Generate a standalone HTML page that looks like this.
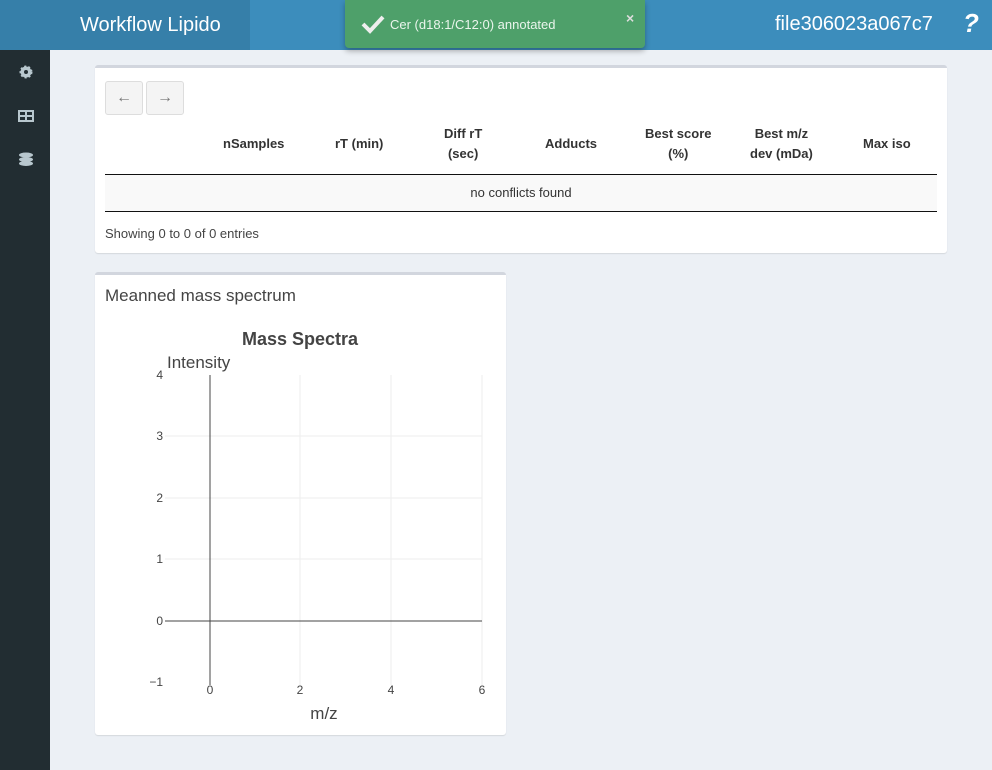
<!DOCTYPE html><html><head><style>
body{margin:0;width:992px;height:770px;background:#ecf0f5;font-family:"Liberation Sans",sans-serif;position:relative;overflow:hidden}
.hdr{position:absolute;left:0;top:0;width:992px;height:50px;background:#3c8dbc}
.logo{position:absolute;left:0;top:0;width:250px;height:50px;background:#367fa9;color:#fff;font-size:20px;line-height:50px}
.side{position:absolute;left:0;top:50px;width:50px;height:720px;background:#222d32}
.box{position:absolute;background:#fff;border-top:3px solid #d2d6de;border-radius:3px;box-shadow:0 1px 1px rgba(0,0,0,.1)}
.t{position:absolute;font-size:13px;color:#444}
.h{font-weight:bold;color:#333;text-align:center;line-height:20px}
</style></head><body>
<div class="hdr"><div class="logo"><span style="position:absolute;left:80px">Workflow Lipido</span></div>
<div style="position:absolute;left:775px;top:13px;color:#fff;font-size:20px">file306023a067c7</div>
<div style="position:absolute;left:963px;top:8px;color:#fff;font-size:26px;font-weight:bold;font-style:italic">?</div></div>
<div style="position:absolute;left:345px;top:0;width:300px;height:48px;background:#4ea06a;border-radius:0 0 4px 4px;box-shadow:0 3px 6px rgba(0,0,0,.3);color:#eaf5ec">
<svg style="position:absolute;left:16px;top:14px" width="24" height="20"><path d="M2 10l7 7L22 3" stroke="#eee" stroke-width="4" fill="none"/></svg>
<div style="position:absolute;left:45px;top:17px;font-size:13px">Cer (d18:1/C12:0) annotated</div>
<div style="position:absolute;left:281px;top:10px;font-size:14px;font-weight:bold;color:#ddd">×</div></div>
<div class="side">
<svg style="position:absolute;left:19px;top:15px" width="14" height="14"><circle cx="7" cy="7" r="5.5" fill="#b8c7ce" stroke="#b8c7ce" stroke-width="2" stroke-dasharray="2 2"/><circle cx="7" cy="7" r="2" fill="#222d32"/></svg>
<svg style="position:absolute;left:18px;top:60px" width="16" height="12"><rect x="1" y="1" width="14" height="10" fill="none" stroke="#b8c7ce" stroke-width="2"/><path d="M1 6h14M8 1v10" stroke="#b8c7ce" stroke-width="2"/></svg>
<svg style="position:absolute;left:18px;top:102px" width="16" height="14"><ellipse cx="8" cy="3" rx="7" ry="2.5" fill="#b8c7ce"/><ellipse cx="8" cy="7.5" rx="7" ry="2.5" fill="#b8c7ce"/><ellipse cx="8" cy="11.5" rx="7" ry="2.5" fill="#b8c7ce"/></svg></div>
<div class="box" style="left:95px;top:65px;width:852px;height:185px">
<div style="position:absolute;left:10px;top:13px;width:36px;height:32px;border:1px solid #ddd;background:#f4f4f4;border-radius:3px;color:#777;text-align:center;line-height:32px">←</div>
<div style="position:absolute;left:51px;top:13px;width:36px;height:32px;border:1px solid #ddd;background:#f4f4f4;border-radius:3px;color:#777;text-align:center;line-height:32px">→</div>
<div style="position:absolute;left:10px;top:106px;width:832px;border-top:1px solid #111"></div>
<div style="position:absolute;left:10px;top:107px;width:832px;height:36px;background:#f9f9f9;border-bottom:1px solid #111;font-size:13px;color:#333;text-align:center;line-height:36px">no conflicts found</div>
<div class="t h" style="left:128px;top:66px">nSamples</div>
<div class="t h" style="left:240px;top:66px">rT (min)</div>
<div class="t h" style="left:349px;top:56px">Diff rT<br>(sec)</div>
<div class="t h" style="left:450px;top:66px">Adducts</div>
<div class="t h" style="left:550px;top:56px">Best score<br>(%)</div>
<div class="t h" style="left:655px;top:56px">Best m/z<br>dev (mDa)</div>
<div class="t h" style="left:768px;top:66px">Max iso</div>
<div class="t" style="left:10px;top:158px">Showing 0 to 0 of 0 entries</div></div>
<div class="box" style="left:95px;top:272px;width:411px;height:460px">
<div style="position:absolute;left:10px;top:11px;font-size:17px;color:#444">Meanned mass spectrum</div>
<svg style="position:absolute;left:0;top:0" width="411" height="463" font-family="Liberation Sans" font-size="12" fill="#444">
<text x="205" y="70" text-anchor="middle" font-weight="bold" font-size="18">Mass Spectra</text>
<text x="72" y="93" font-size="17">Intensity</text>
<g stroke="#eee"><path d="M205 100v310M296 100v310M387 100v310M70 161h317M70 223h317M70 284h317"/></g>
<path d="M115 100v310M70 346h317" stroke="#444"/>
<g text-anchor="end"><text x="68" y="104">4</text><text x="68" y="165">3</text><text x="68" y="227">2</text><text x="68" y="288">1</text><text x="68" y="350">0</text><text x="68" y="411">−1</text></g>
<g text-anchor="middle"><text x="115" y="419">0</text><text x="205" y="419">2</text><text x="296" y="419">4</text><text x="387" y="419">6</text><text x="229" y="444" font-size="17">m/z</text></g></svg></div>
</body></html>
